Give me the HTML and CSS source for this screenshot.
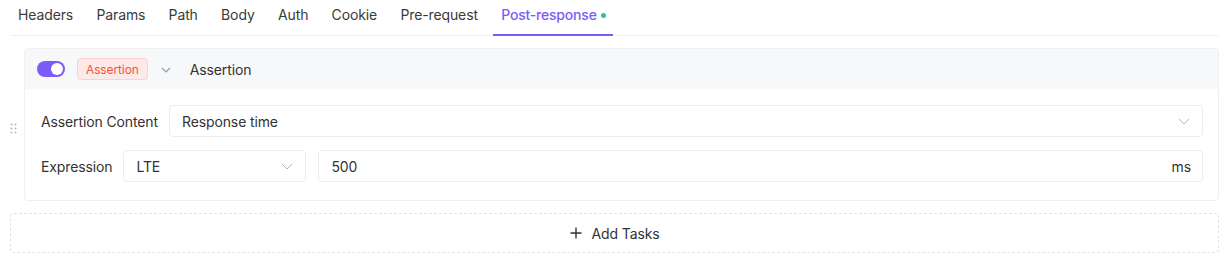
FILE: index.html
```html
<!DOCTYPE html>
<html lang="en">
<head>
<meta charset="utf-8">
<title>Post-response</title>
<link rel="stylesheet" href="styles.css">
</head>
<body>
<div class="page">
  <nav class="tabs">
    <div class="tab">Headers</div>
    <div class="tab">Params</div>
    <div class="tab">Path</div>
    <div class="tab">Body</div>
    <div class="tab">Auth</div>
    <div class="tab">Cookie</div>
    <div class="tab">Pre-request</div>
    <div class="tab active">Post-response<span class="dot"></span></div>
  </nav>

  <div class="task">
    <div class="handle">
      <svg width="8" height="12" viewBox="0 0 8 12"><g fill="#b8b8b8"><circle cx="1.5" cy="1.5" r="1"/><circle cx="5.5" cy="1.5" r="1"/><circle cx="1.5" cy="5.5" r="1"/><circle cx="5.5" cy="5.5" r="1"/><circle cx="1.5" cy="9.5" r="1"/><circle cx="5.5" cy="9.5" r="1"/></g></svg>
    </div>
    <div class="card">
      <div class="card-head">
        <span class="switch"><span class="knob"></span></span>
        <span class="tag">Assertion</span>
        <svg class="head-chev" width="10" height="6" viewBox="0 0 10 6"><path d="M1 1l4 4 4-4" fill="none" stroke="#999" stroke-width="1.1"/></svg>
        <span class="title">Assertion</span>
      </div>
      <div class="card-body">
        <div class="row">
          <span class="label">Assertion Content</span>
          <div class="field grow">
            <span class="value">Response time</span>
            <svg class="chev" width="12" height="7" viewBox="0 0 12 7"><path d="M1 1l5 5 5-5" fill="none" stroke="#b4b4b4" stroke-width="1"/></svg>
          </div>
        </div>
        <div class="row">
          <span class="label">Expression</span>
          <div class="field op">
            <span class="value">LTE</span>
            <svg class="chev" width="12" height="7" viewBox="0 0 12 7"><path d="M1 1l5 5 5-5" fill="none" stroke="#b4b4b4" stroke-width="1"/></svg>
          </div>
          <div class="field grow">
            <span class="value">500</span>
            <span class="unit">ms</span>
          </div>
        </div>
      </div>
    </div>
  </div>

  <div class="add">
    <svg width="12" height="12" viewBox="0 0 12 12"><path d="M6 0.5v11M0.5 6h11" stroke="#333" stroke-width="1.4"/></svg>
    <span>Add Tasks</span>
  </div>
</div>
</body>
</html>
```

FILE: styles.css
```css
* { box-sizing: border-box; }
html, body { margin: 0; padding: 0; background: #fff; }
body {
  font-family: Inter, "Noto Sans", sans-serif;
  font-size: 14px;
  letter-spacing: -0.12px;
  color: #333;
}
.page { padding: 0 10px; }

.tabs {
  display: flex;
  gap: 7.3px;
  height: 36px;
  border-bottom: 1px solid #efefef;
}
.tab {
  position: relative;
  display: flex;
  align-items: center;
  padding: 0 8px 7px;
  color: #3a3a3a;
  white-space: nowrap;
}
.tab.active {
  color: #7b5cf6;
  font-weight: 500;
  padding-left: 8px;
  padding-right: 7px;
  letter-spacing: -0.2px;
}
.tab.active::after {
  content: "";
  position: absolute;
  left: 0; right: 0; bottom: -1px;
  height: 2px;
  background: #7b5cf6;
}
.dot {
  width: 5px; height: 5px;
  border-radius: 50%;
  background: #22c997;
  margin-left: 4px;
  margin-top: 2px;
}

.task {
  display: flex;
  margin-top: 12px;
}
.handle {
  width: 14px;
  display: flex;
  align-items: flex-start;
  padding-top: 75px;
}
.card {
  flex: 1;
  border: 1px solid #efefef;
  border-radius: 4px;
  overflow: hidden;
}
.card-head {
  height: 40px;
  background: #f7f8fa;
  display: flex;
  align-items: center;
  padding: 0 12px;
}
.switch {
  width: 28px; height: 16px;
  border-radius: 8px;
  background: #7b5cf6;
  position: relative;
  margin-right: 12px;
}
.knob {
  position: absolute;
  right: 2px; top: 2px;
  width: 12px; height: 12px;
  border-radius: 50%;
  background: #fff;
}
.tag {
  height: 22px;
  padding: 0 8px;
  display: flex;
  align-items: center;
  font-size: 12px;
  color: #f4533d;
  background: #fdeae8;
  border: 1px solid #fbd3ce;
  border-radius: 4px;
}
.head-chev { margin-left: 13px; margin-top: 1px; }
.title { margin-left: 19px; color: #333; }

.card-body {
  padding: 16px 15px 18px 16px;
  display: flex;
  flex-direction: column;
  gap: 13px;
}
.row {
  display: flex;
  align-items: center;
  gap: 11px;
}
.label { color: #333; white-space: nowrap; }
.field {
  height: 32px;
  border: 1px solid #ececec;
  border-radius: 4px;
  display: flex;
  align-items: center;
  justify-content: space-between;
  padding: 0 11px 0 12px;
}
.grow { flex: 1; }
.op { width: 183px; margin-right: 1px; }
.chev { margin-right: 1px; }
.unit { color: #333; }

.add {
  margin-top: 12px;
  height: 40px;
  border: 1px dashed #e3e3e3;
  border-radius: 4px;
  display: flex;
  align-items: center;
  justify-content: center;
  gap: 10px;
  color: #333;
}
```
